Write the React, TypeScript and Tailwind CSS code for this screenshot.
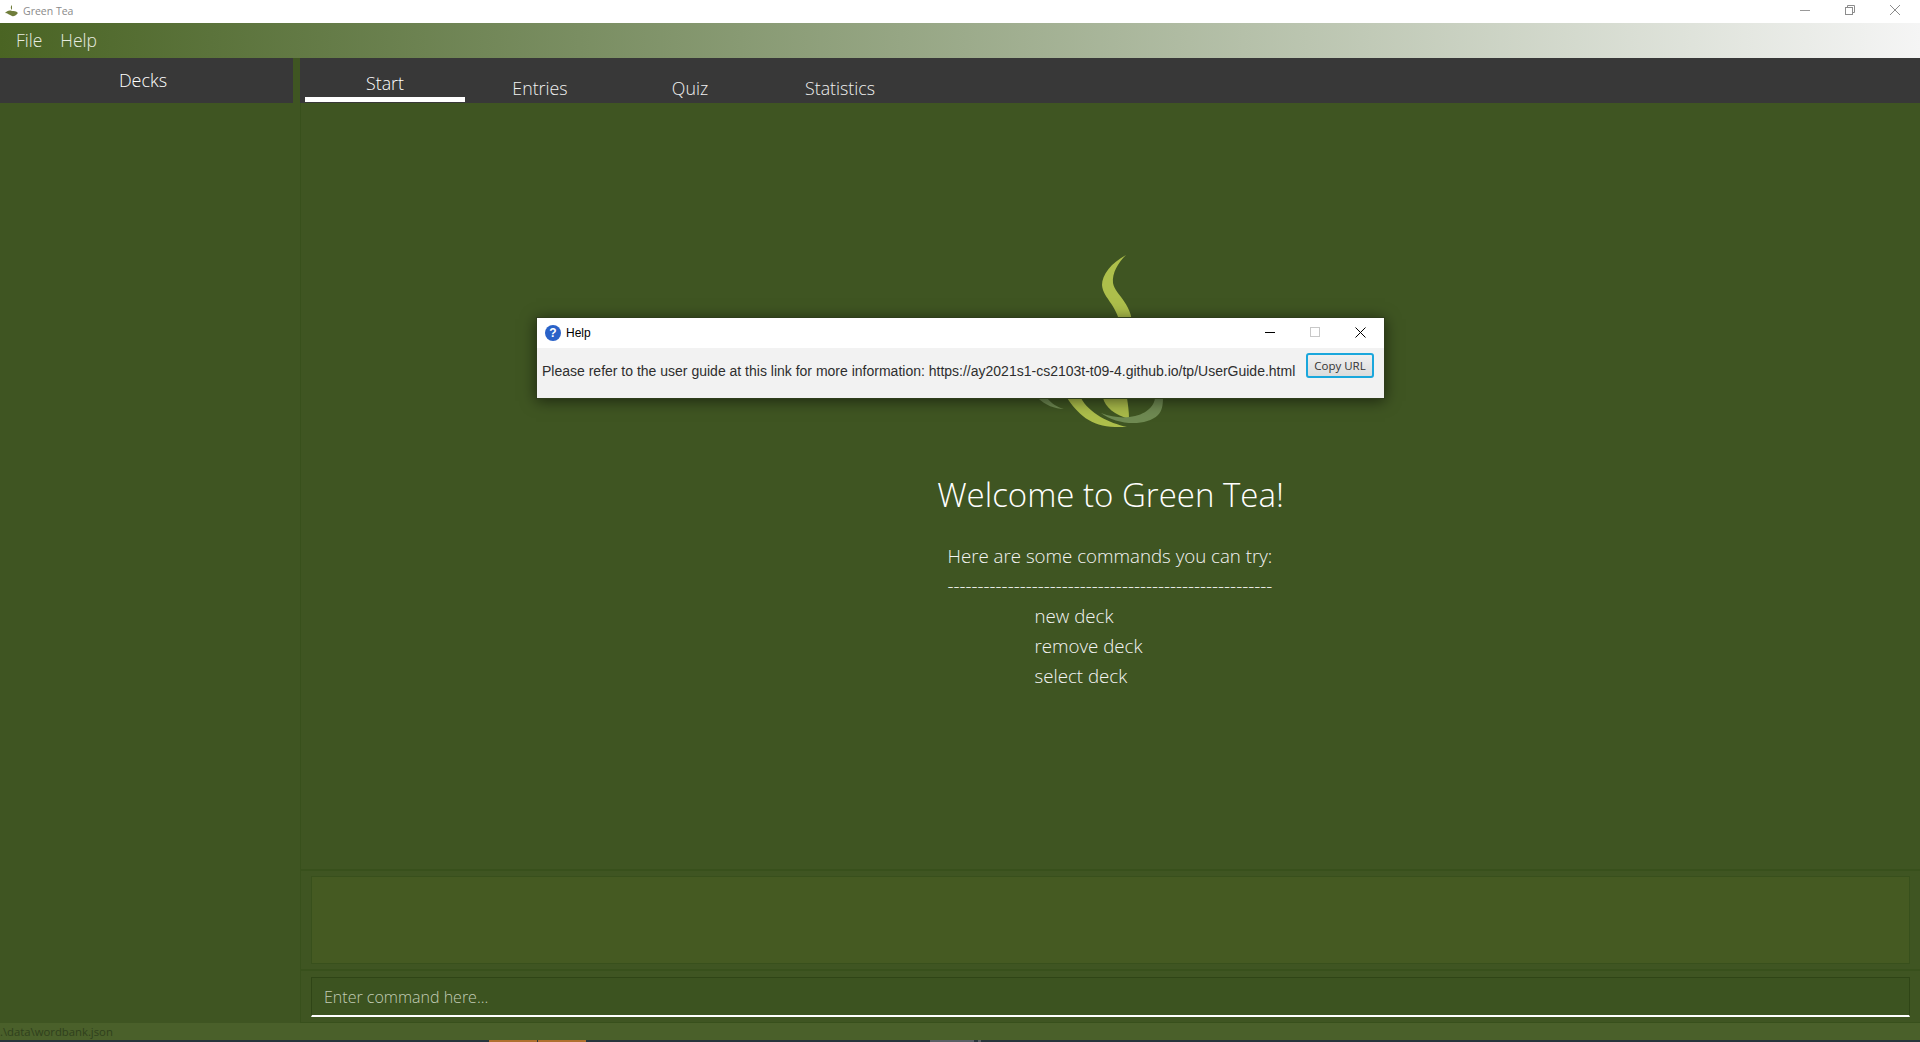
const font = { fontFamily: '"Open Sans", "Noto Sans", sans-serif' }

const TeaLogo = () => (
  <svg width="160" height="176" viewBox="0 0 160 176" className="block">
    <path d="M95 0 C80 8 71 20 71 30 C72 44 88 50 90 76 L101 76 C104 50 84 40 82 28 C81 18 87 8 95 0 Z" fill="#adbf4b" />
    <path d="M36 143 C46 158 60 172 84 172 L96 172 C78 168 58 158 50 143 Z" fill="#adbf4b" />
    <path d="M72 143 C74 152 84 160 98 164 C98 156 97 150 96 143 Z" fill="#a9ba49" />
    <path d="M7 143 C14 150 24 154 33 154 C26 152 20 148 16 143 Z" fill="#6f8a52" />
    <path d="M70 158 C85 170 115 172 127 160 C131 156 132 150 132 143 L124 143 C122 160 95 168 70 158 Z" fill="#6f8a52" />
  </svg>
)

const HelpDialog = () => (
  <div className="absolute left-[536px] top-[317px] w-[849px] h-[82px] flex flex-col shadow-[0_2px_14px_rgba(0,0,0,0.55)] border border-[#2f3d1c]" style={{ fontFamily: '"Liberation Sans", Arial, sans-serif' }}>
    <div className="h-[30px] bg-white flex items-center pl-[8px] pr-[18px]">
      <div className="w-4 h-4 rounded-full bg-[#2a62c8] text-white text-[12px] font-bold flex items-center justify-center leading-none">?</div>
      <span className="ml-[5px] text-[12px] text-black">Help</span>
      <div className="ml-auto mb-[2px] flex items-center gap-[35px]">
        <svg width="10" height="10" viewBox="0 0 10 10" stroke="#000" fill="none">
          <path d="M0 5.5 H10" />
        </svg>
        <svg width="10" height="10" viewBox="0 0 10 10" stroke="#c8c8c8" fill="none">
          <rect x="0.5" y="0.5" width="9" height="9" />
        </svg>
        <svg width="11" height="11" viewBox="0 0 11 11" stroke="#000" fill="none">
          <path d="M0.5 0.5 L10.5 10.5 M10.5 0.5 L0.5 10.5" />
        </svg>
      </div>
    </div>
    <div className="flex-1 bg-[#f2f2f2] flex items-start pl-[5px]">
      <span className="text-[14px] text-[#2e2e2e] mt-[13px] whitespace-nowrap">
        Please refer to the user guide at this link for more information: https://ay2021s1-cs2103t-t09-4.github.io/tp/UserGuide.html
      </span>
      <button className="ml-auto mr-[10px] mt-[5px] w-[68px] h-[25px] rounded-[3px] border-2 border-[#1aa7dc] bg-linear-to-b from-[#f0f0f0] to-[#dcdcdc] text-[11.5px] text-[#333] leading-none" style={font}>
        Copy URL
      </button>
    </div>
  </div>
)

export default function App() {
  return (
    <div className="relative w-[1920px] h-[1042px] overflow-hidden flex flex-col bg-[#3f5522]" style={font}>
      <div className="h-[23px] bg-white flex items-center shrink-0 pr-[20px]">
        <svg width="14" height="14" viewBox="0 0 14 14" className="ml-[4px]">
          <path d="M8 0 C6 2 7 4 8 5 L8 6 C5 5 3 6 1 8 C4 8 5 10 8 11 C11 12 13 9 14 8 C12 6 10 6 8 6 Z" fill="#6f7d3a" />
        </svg>
        <span className="ml-[5px] text-[10.5px] text-[#8a8a8a]">Green Tea</span>
        <div className="ml-auto mb-[3px] flex items-center gap-[35px]">
          <svg width="10" height="10" viewBox="0 0 10 10" stroke="#999" fill="none">
            <path d="M0 5.5 H10" />
          </svg>
          <svg width="10" height="10" viewBox="0 0 10 10" stroke="#8c8c8c" fill="none">
            <rect x="0.5" y="2.5" width="7" height="7" />
            <path d="M2.5 2.5 V0.5 H9.5 V7.5 H7.5" />
          </svg>
          <svg width="10" height="10" viewBox="0 0 10 10" stroke="#8c8c8c" fill="none">
            <path d="M0 0 L10 10 M10 0 L0 10" />
          </svg>
        </div>
      </div>

      <div className="h-[35px] shrink-0 flex items-center gap-[18px] pl-[16px] text-[17.5px] font-light text-[#e8ece0] bg-linear-to-r from-[#4a6423] to-[#f5f5f5]">
        <span>File</span>
        <span>Help</span>
      </div>

      <div className="flex-1 flex min-h-0">
        <div className="w-[300px] shrink-0 flex flex-col">
          <div className="w-[293px] h-[45px] bg-[#383838] flex items-center justify-center pr-[7px] text-[18px] font-light text-white">
            Decks
          </div>
        </div>

        <div className="flex-1 flex flex-col border-l border-[#38501c]">
          <div className="h-[45px] bg-[#383838] flex shrink-0 -ml-px pl-[5px] text-[17.8px] font-light">
            <div className="w-[160px] h-[44px] flex justify-center border-b-[5px] border-white text-white pt-[10px] leading-[30px]">Start</div>
            <div className="w-[150px] flex justify-center text-[#f0f0f0] pt-[15px] leading-[30px]">Entries</div>
            <div className="w-[150px] flex justify-center text-[#f0f0f0] pt-[15px] leading-[30px]">Quiz</div>
            <div className="w-[150px] flex justify-center text-[#f0f0f0] pt-[15px] leading-[30px]">Statistics</div>
          </div>

          <div className="h-[768px] shrink-0 flex flex-col items-center pt-[152px] border-b-2 border-[#38501c]">
            <TeaLogo />
            <h1 className="mt-[40px] text-[33px] font-light text-white leading-[48px] whitespace-nowrap">Welcome to Green Tea!</h1>
            <div className="mt-[22px] w-[326px] text-[18.7px] font-light text-[#f4f4f4] leading-[30px]">
              <p className="whitespace-nowrap">Here are some commands you can try:</p>
              <p className="whitespace-nowrap">------------------------------------------------------</p>
              <div className="pl-[87px]">
                <p>new deck</p>
                <p>remove deck</p>
                <p>select deck</p>
              </div>
            </div>
          </div>

          <div className="h-[100px] shrink-0 px-[10px] py-[5px] border-b-2 border-[#38501c]">
            <div className="h-[88px] bg-[#455a22] border border-[#38501c]" />
          </div>

          <div className="h-[52px] shrink-0 px-[10px] pt-[6px] border-b border-[#38501c]">
            <div className="h-[40px] flex items-center pl-[12px] border border-[#2f4516] border-b-2 border-b-white bg-[#3c5320] text-[16px] font-light text-[#c3cdb6]">
              Enter command here...
            </div>
          </div>
        </div>
      </div>

      <div className="h-[17px] shrink-0 bg-[#4a602a] text-[11.3px] leading-[17px] text-[#2f3f1c]">.\data\wordbank.json</div>

      <div className="h-[2px] shrink-0 bg-[#27353c] flex">
        <div className="w-[489px]" />
        <div className="w-[48px] bg-[#b0702f]" />
        <div className="w-px" />
        <div className="w-[48px] bg-[#b0702f]" />
        <div className="w-[344px]" />
        <div className="w-[44px] bg-[#5a6066]" />
        <div className="w-[4px]" />
        <div className="w-[3px] bg-[#5a6066]" />
      </div>

      <HelpDialog />
    </div>
  )
}
